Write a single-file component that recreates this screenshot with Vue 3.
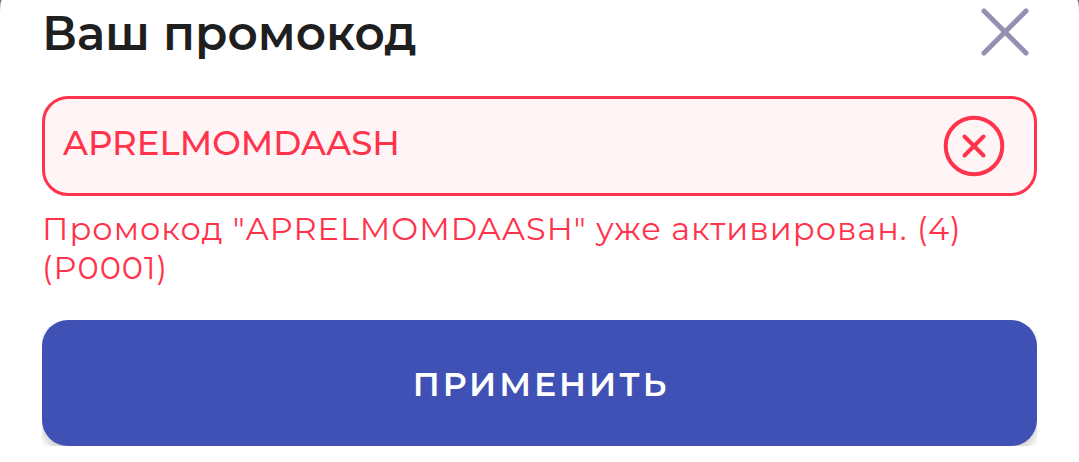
<script setup>
import { ref } from 'vue'

const code = ref('APRELMOMDAASH')
const error = ref('Промокод "APRELMOMDAASH" уже активирован. (4) (P0001)')

function clearCode() {
  code.value = ''
  error.value = ''
}
</script>

<template>
  <main class="sheet">
    <header class="sheet-header">
      <h1><label for="promo">Ваш промокод</label></h1>
      <button class="icon-button" type="button" aria-label="Закрыть">
        <svg width="48" height="48" viewBox="0 0 48 48" fill="none">
          <path d="M3 3L45 45M45 3L3 45" stroke="#9490b2" stroke-width="5" stroke-linecap="round" />
        </svg>
      </button>
    </header>

    <form @submit.prevent>
      <div class="field" :class="{ invalid: error }">
        <input id="promo" v-model="code" type="text" autocomplete="off" spellcheck="false" aria-describedby="promo-error" />
        <button class="icon-button" type="button" aria-label="Очистить" @click="clearCode">
          <svg width="62" height="62" viewBox="0 0 62 62" fill="none" stroke="#ff334b">
            <circle cx="31" cy="31" r="28.3" stroke-width="4" />
            <path d="M21.5 21.5L40.5 40.5M40.5 21.5L21.5 40.5" stroke-width="4" stroke-linecap="round" />
          </svg>
        </button>
      </div>
      <p id="promo-error" class="error">{{ error }}</p>

      <div class="actions">
        <button class="apply" type="submit">ПРИМЕНИТЬ</button>
      </div>
    </form>
  </main>
</template>

<style>
body {
  background: #777;
}
</style>

<style scoped>
* {
  box-sizing: border-box;
}

.sheet {
  min-height: 100vh;
  padding: 0 42px 16px;
  background: #fff;
  border-radius: 2px 2px 0 0 / 12px 12px 0 0;
  font-family: Montserrat, Inter, sans-serif;
}

.sheet-header {
  display: flex;
  align-items: flex-start;
  justify-content: space-between;
  padding: 4px 8px 32px 0;
}

.sheet-header .icon-button {
  margin-top: 4px;
}

h1 {
  margin: 0;
  font-size: 47px;
  font-weight: 600;
  line-height: 60px;
  color: #1f1f1f;
}

.icon-button {
  display: flex;
  flex: none;
  padding: 0;
  border: none;
  background: none;
  cursor: pointer;
}

.field {
  display: flex;
  align-items: center;
  height: 100px;
  padding: 0 29px 0 18px;
  border: 3px solid #9490b2;
  border-radius: 26px;
}

.field.invalid {
  border-color: #ff334b;
  background: #fff5f7;
}

.field input {
  flex: 1;
  min-width: 0;
  padding: 0 0 6px;
  border: none;
  outline: none;
  background: transparent;
  color: #ff334b;
  font-family: inherit;
  font-size: 34px;
  font-weight: 500;
  line-height: 40px;
}

.error {
  margin: 13px 0 33px;
  color: #ff334b;
  font-size: 32px;
  letter-spacing: 1px;
  line-height: 39px;
}

/* keeps the button shadow inside the row */
.actions {
  overflow: hidden;
}

.apply {
  display: block;
  width: 100%;
  height: 126px;
  padding: 2px 0 0 3px;
  border: none;
  border-radius: 26px;
  background: #3f51b5;
  box-shadow: 0 6px 10px rgba(0, 0, 0, 0.2);
  color: #fff;
  font-family: inherit;
  font-size: 33px;
  font-weight: 600;
  letter-spacing: 3px;
  cursor: pointer;
}
</style>
